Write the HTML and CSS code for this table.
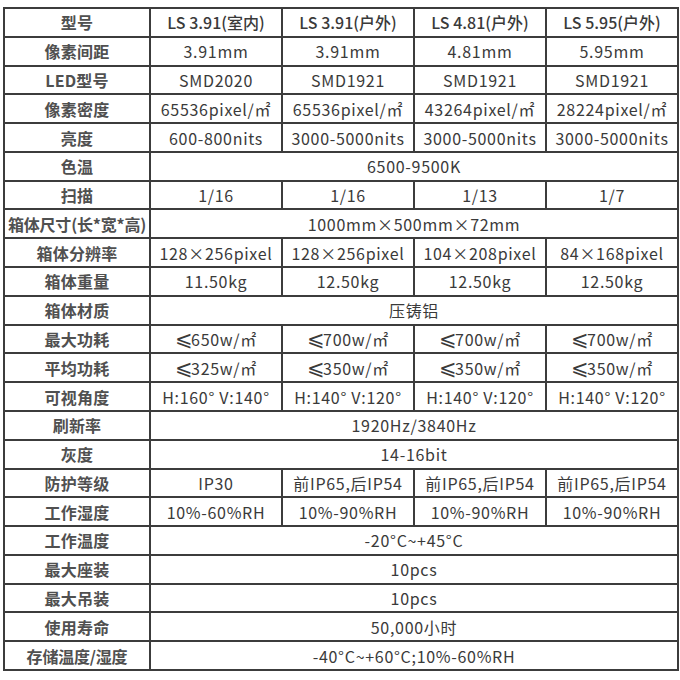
FILE: index.html
```html
<!DOCTYPE html>
<html lang="zh">
<head>
<meta charset="utf-8">
<link rel="stylesheet" href="styles.css">
</head>
<body>
<table class="spec">
<colgroup>
<col class="c-label"><col class="c-val"><col class="c-val"><col class="c-val"><col class="c-val">
</colgroup>
<tbody>
<tr class="head"><th>型号</th><td>LS 3.91(室内)</td><td>LS 3.91(户外)</td><td>LS 4.81(户外)</td><td>LS 5.95(户外)</td></tr>
<tr><th>像素间距</th><td>3.91mm</td><td>3.91mm</td><td>4.81mm</td><td>5.95mm</td></tr>
<tr><th>LED型号</th><td>SMD2020</td><td>SMD1921</td><td>SMD1921</td><td>SMD1921</td></tr>
<tr><th>像素密度</th><td>65536pixel/㎡</td><td>65536pixel/㎡</td><td>43264pixel/㎡</td><td>28224pixel/㎡</td></tr>
<tr><th>亮度</th><td>600-800nits</td><td>3000-5000nits</td><td>3000-5000nits</td><td>3000-5000nits</td></tr>
<tr><th>色温</th><td colspan="4">6500-9500K</td></tr>
<tr><th>扫描</th><td>1/16</td><td>1/16</td><td>1/13</td><td>1/7</td></tr>
<tr><th class="long">箱体尺寸(长*宽*高)</th><td colspan="4">1000mm×500mm×72mm</td></tr>
<tr><th>箱体分辨率</th><td>128×256pixel</td><td>128×256pixel</td><td>104×208pixel</td><td>84×168pixel</td></tr>
<tr><th>箱体重量</th><td>11.50kg</td><td>12.50kg</td><td>12.50kg</td><td>12.50kg</td></tr>
<tr><th>箱体材质</th><td colspan="4">压铸铝</td></tr>
<tr><th>最大功耗</th><td><span class="le">⩽</span>650w/㎡</td><td><span class="le">⩽</span>700w/㎡</td><td><span class="le">⩽</span>700w/㎡</td><td><span class="le">⩽</span>700w/㎡</td></tr>
<tr><th>平均功耗</th><td><span class="le">⩽</span>325w/㎡</td><td><span class="le">⩽</span>350w/㎡</td><td><span class="le">⩽</span>350w/㎡</td><td><span class="le">⩽</span>350w/㎡</td></tr>
<tr><th>可视角度</th><td>H:160° V:140°</td><td>H:140° V:120°</td><td>H:140° V:120°</td><td>H:140° V:120°</td></tr>
<tr><th>刷新率</th><td colspan="4">1920Hz/3840Hz</td></tr>
<tr><th>灰度</th><td colspan="4">14-16bit</td></tr>
<tr><th>防护等级</th><td>IP30</td><td>前IP65,后IP54</td><td>前IP65,后IP54</td><td>前IP65,后IP54</td></tr>
<tr><th>工作湿度</th><td>10%-60%RH</td><td>10%-90%RH</td><td>10%-90%RH</td><td>10%-90%RH</td></tr>
<tr><th>工作温度</th><td colspan="4">-20°C~+45°C</td></tr>
<tr><th>最大座装</th><td colspan="4">10pcs</td></tr>
<tr><th>最大吊装</th><td colspan="4">10pcs</td></tr>
<tr><th>使用寿命</th><td colspan="4">50,000小时</td></tr>
<tr><th class="long">存储温度/湿度</th><td colspan="4">-40°C~+60°C;10%-60%RH</td></tr>
</tbody>
</table>
</body>
</html>
```

FILE: styles.css
```css
html, body {
  margin: 0;
  padding: 0;
  background: #ffffff;
}

body {
  padding: 7px 0 0 3px;
  font-family: "Noto Sans CJK SC", "Noto Sans", sans-serif;
  color: #3a3a3a;
}

.spec {
  border-collapse: collapse;
  table-layout: fixed;
  width: 674px;
  height: 664px;
}

.c-label { width: 146px; }
.c-val { width: 132px; }

.spec th,
.spec td {
  border: 2px solid #3c3c3c;
  padding: 0;
  text-align: center;
  vertical-align: middle;
  font-size: 16px;
  line-height: 1;
  white-space: nowrap;
  letter-spacing: 0.7px;
  height: 26px;
}

.spec th {
  font-weight: 700;
  color: #505050;
  letter-spacing: 0.2px;
}

.spec th.long {
  letter-spacing: -0.2px;
}

.spec td {
  font-weight: 400;
}

.spec .head td {
  font-size: 16px;
  font-weight: 500;
  letter-spacing: 0;
}

.le {
  font-size: 21px;
  line-height: 0;
  letter-spacing: 0;
  margin-right: -2px;
}
```
